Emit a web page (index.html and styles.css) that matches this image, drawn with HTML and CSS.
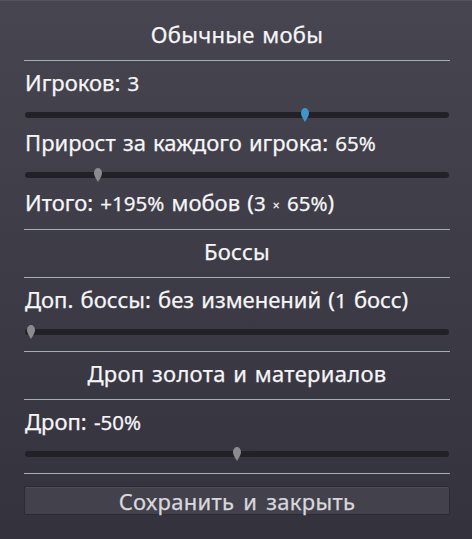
FILE: index.html
```html
<!DOCTYPE html>
<html lang="ru">
<head>
<meta charset="utf-8">
<title>Настройки</title>
<link rel="stylesheet" href="styles.css">
</head>
<body>
<div class="panel">
  <div class="heading">Обычные мобы</div>
  <div class="sep"></div>
  <div class="field">
    <div class="label">Игроков: <span class="num">3</span></div>
    <div class="slider"><div class="track"></div><div class="rail"><svg class="grab grab-focus" style="left:66.4%" viewBox="0 0 8 14"><path d="M4 14C3 12 0 8.5 0 5C0 2 1.8 0 4 0C6.2 0 8 2 8 5C8 8.5 5 12 4 14Z"/></svg></div></div>
  </div>
  <div class="field">
    <div class="label">Прирост за каждого игрока: <span class="num">65%</span></div>
    <div class="slider"><div class="track"></div><div class="rail"><svg class="grab" style="left:16.5%" viewBox="0 0 8 14"><path d="M4 14C3 12 0 8.5 0 5C0 2 1.8 0 4 0C6.2 0 8 2 8 5C8 8.5 5 12 4 14Z"/></svg></div></div>
  </div>
  <div class="label total">Итого: <span class="num">+195%</span> мобов (<span class="num">3</span> <span class="times">×</span> <span class="num">65%</span>)</div>
  <div class="sep"></div>
  <div class="heading">Боссы</div>
  <div class="sep"></div>
  <div class="field field-last">
    <div class="label">Доп. боссы: без изменений (<span class="num">1</span> босс)</div>
    <div class="slider"><div class="track"></div><div class="rail"><svg class="grab" style="left:0.6%" viewBox="0 0 8 14"><path d="M4 14C3 12 0 8.5 0 5C0 2 1.8 0 4 0C6.2 0 8 2 8 5C8 8.5 5 12 4 14Z"/></svg></div></div>
  </div>
  <div class="sep"></div>
  <div class="heading">Дроп золота и материалов</div>
  <div class="sep"></div>
  <div class="field field-last">
    <div class="label">Дроп: <span class="num">-50%</span></div>
    <div class="slider"><div class="track"></div><div class="rail"><svg class="grab" style="left:50%" viewBox="0 0 8 14"><path d="M4 14C3 12 0 8.5 0 5C0 2 1.8 0 4 0C6.2 0 8 2 8 5C8 8.5 5 12 4 14Z"/></svg></div></div>
  </div>
  <div class="sep sep-end"></div>
  <button class="btn" type="button">Сохранить и закрыть</button>
</div>
</body>
</html>
```
FILE: styles.css
```css
html, body {
  margin: 0;
  padding: 0;
  height: 100%;
}
body {
  background: linear-gradient(#47454f, #34323d);
  font-family: "Noto Sans", "Open Sans", sans-serif;
  font-size: 22px;
  word-spacing: 1.5px;
  color: #f6f6f8;
  -webkit-text-stroke: 0.25px currentColor;
  border-top: 1px solid #55535d;
  box-sizing: border-box;
}
.panel {
  display: flex;
  flex-direction: column;
  padding: 20px 22px 0 24px;
}
.heading {
  height: 26px;
  line-height: 26px;
  text-align: center;
  letter-spacing: 0.3px;
  margin-bottom: 13px;
}
.sep {
  height: 1px;
  background: #a3aeb6;
  margin-bottom: 8px;
}
.sep-end {
  margin-bottom: 12px;
}
.label {
  height: 26px;
  line-height: 26px;
  padding-left: 1px;
  white-space: nowrap;
}
.num {
  font-size: 20.5px;
}
.times {
  font-size: 12px;
  vertical-align: 1px;
}
.field {
  display: flex;
  flex-direction: column;
  gap: 10px;
  margin-bottom: 4px;
}
.field-last {
  margin-bottom: 9px;
}
.total {
  margin-bottom: 14px;
}
.slider {
  position: relative;
  height: 20px;
  margin: 0 1px;
  display: flex;
  align-items: center;
}
.track {
  flex: 1;
  height: 6px;
  border-radius: 3px;
  background: #222127;
}
.rail {
  position: absolute;
  left: 4px;
  right: 4px;
  top: 0;
  bottom: 0;
}
.grab {
  position: absolute;
  top: 3px;
  width: 8px;
  height: 14px;
  margin-left: -4px;
  fill: #8b8a8f;
}
.grab-focus {
  fill: #3f94c9;
}
.btn {
  height: 29px;
  margin: 0;
  padding: 0;
  border: 1px solid #2c2a33;
  border-radius: 2px;
  background: #43414c;
  box-shadow: inset 0 1px 0 #4e4c57;
  color: #d8d8dc;
  -webkit-text-stroke: 0.25px currentColor;
  font-family: "Noto Sans", "Open Sans", sans-serif;
  font-size: 22px;
  word-spacing: 3px;
  letter-spacing: 0.3px;
  line-height: 26px;
  text-align: center;
}
```
